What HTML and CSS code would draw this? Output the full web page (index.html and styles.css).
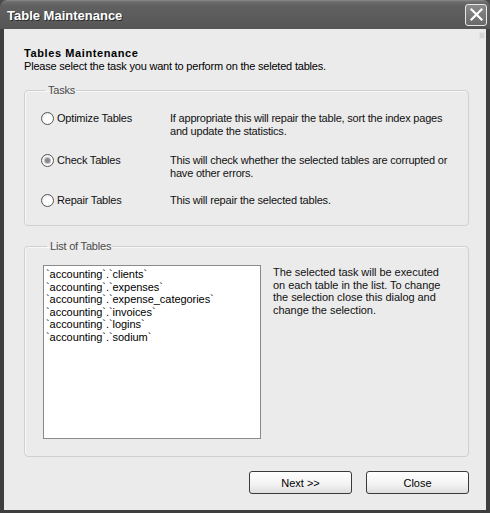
FILE: index.html
```html
<!DOCTYPE html>
<html>
<head>
<meta charset="utf-8">
<title>Table Maintenance</title>
<link rel="stylesheet" href="styles.css">
</head>
<body>
<div class="window">
  <div class="titlebar">
    <span class="title">Table Maintenance</span>
    <span class="close-btn">
      <svg width="15" height="15" viewBox="0 0 15 15"><path d="M2.5 2.5 L12.5 12.5 M12.5 2.5 L2.5 12.5" stroke="#fff" stroke-width="2.2" stroke-linecap="square"/></svg>
    </span>
  </div>
  <div class="client">
    <span class="grip"></span>
    <div class="heading">Tables Maintenance</div>
    <div class="subheading">Please select the task you want to perform on the seleted tables.</div>

    <fieldset class="group tasks">
      <legend>Tasks</legend>
      <div class="task row1">
        <label class="radio"><span class="dot"></span>Optimize Tables</label>
        <div class="desc">If appropriate this will repair the table, sort the index pages<br>and update the statistics.</div>
      </div>
      <div class="task row2">
        <label class="radio"><span class="dot checked"></span>Check Tables</label>
        <div class="desc">This will check whether the selected tables are corrupted or<br>have other errors.</div>
      </div>
      <div class="task row3">
        <label class="radio"><span class="dot"></span>Repair Tables</label>
        <div class="desc">This will repair the selected tables.</div>
      </div>
    </fieldset>

    <fieldset class="group tables">
      <legend>List of Tables</legend>
      <div class="tables-body">
        <ul class="listbox">
          <li>`accounting`.`clients`</li>
          <li>`accounting`.`expenses`</li>
          <li>`accounting`.`expense_categories`</li>
          <li>`accounting`.`invoices`</li>
          <li>`accounting`.`logins`</li>
          <li>`accounting`.`sodium`</li>
        </ul>
        <p class="note">The selected task will be executed<br>on each table in the list. To change<br>the selection close this dialog and<br>change the selection.</p>
      </div>
    </fieldset>

    <div class="buttons">
      <button class="btn">Next &gt;&gt;</button>
      <button class="btn">Close</button>
    </div>
  </div>
</div>
</body>
</html>
```
FILE: styles.css
```css
* { box-sizing: border-box; }
html, body { margin: 0; padding: 0; background: #4a4a4a; }
body { width: 490px; height: 513px; overflow: hidden; font-family: "Liberation Sans", Arial, sans-serif; font-size: 11px; color: #000; letter-spacing: -0.2px; }

.window {
  width: 490px; height: 513px;
  display: flex; flex-direction: column;
  background: #3e3e3e;
  border-radius: 7px 7px 0 0;
  overflow: hidden;
}

.titlebar {
  height: 29px; flex: none;
  display: flex; align-items: center; justify-content: space-between;
  padding: 0 3px 0 7px;
  background: linear-gradient(#8a8a8a 0px, #6c6c6c 2px, #606060 6px, #5a5a5a 20px, #555 29px);
}
.title {
  color: #fff; font-weight: bold; font-size: 13px;
  text-shadow: 1px 1px 0 #2a2a2a;
  letter-spacing: 0;
  padding-top: 1px;
}
.close-btn {
  width: 22px; height: 22px;
  border: 1px solid #e8e8e8; border-radius: 3px;
  background: linear-gradient(#8a8a8a, #6a6a6a);
  display: flex; align-items: center; justify-content: center;
}

.client {
  flex: 1;
  margin: 0 4px 3px 4px;
  background: #ebebeb;
  padding: 18px 17px 0 20px;
  display: flex; flex-direction: column;
  position: relative;
}
.grip {
  position: absolute; right: 1px; top: 3px;
  width: 6px; height: 7px; background: #d6d6d6; border: 1px solid #e4e4e4;
}

.heading { font-weight: bold; line-height: 13px; height: 13px; letter-spacing: 0.6px; }
.subheading { line-height: 13px; margin-top: 0; }

.group {
  margin: 0; padding: 0;
  border: 1px solid #d0d0d0;
  border-radius: 4px;
  box-shadow: inset 1px 1px 0 #f8f8f8;
  min-inline-size: 0;
}
.group legend {
  margin-left: 4px;
  padding: 0 1px 0 3px;
  color: #4a4a4a;
  line-height: 13px;
}

.tasks { margin-top: 11px; height: 142px; padding: 15px 0 0 16px; }
.task { display: flex; line-height: 13px; }
.row1 { height: 42px; }
.row2 { height: 40px; }
.radio { width: 129px; display: flex; align-items: flex-start; color: #111; }
.dot {
  width: 13px; height: 13px; border-radius: 50%;
  border: 1px solid #555;
  background: radial-gradient(circle at 60% 60%, #fff 40%, #dcdcdc 100%);
  margin: 0 3px 0 0;
  display: flex; align-items: center; justify-content: center;
}
.dot.checked::after {
  content: ""; width: 5px; height: 5px; border-radius: 50%;
  background: #8a8a8a; box-shadow: 0 0 0 1px #c0c0c0;
}
.desc { color: #111; }

.tables { margin-top: 14px; height: 217px; padding: 12px 0 0 18px; }
.tables-body { display: flex; align-items: flex-start; }
.listbox {
  margin: 0; padding: 2px 0 0 2px; list-style: none;
  width: 218px; height: 174px;
  background: #fff; border: 1px solid #8a8a8a;
  line-height: 12.6px;
  letter-spacing: -0.05px;
}
.note { margin: 1px 0 0 12px; line-height: 12.7px; color: #111; letter-spacing: -0.05px; }

.buttons { display: flex; justify-content: flex-end; gap: 14px; margin-top: 14px; }
.btn {
  width: 103px; height: 23px;
  font-family: "Liberation Sans", Arial, sans-serif; font-size: 11px; color: #000;
  border: 1px solid #3a3a3a; border-radius: 3px;
  background: linear-gradient(#ffffff, #f2f2f2 60%, #dedede);
  padding: 0;
}
```
